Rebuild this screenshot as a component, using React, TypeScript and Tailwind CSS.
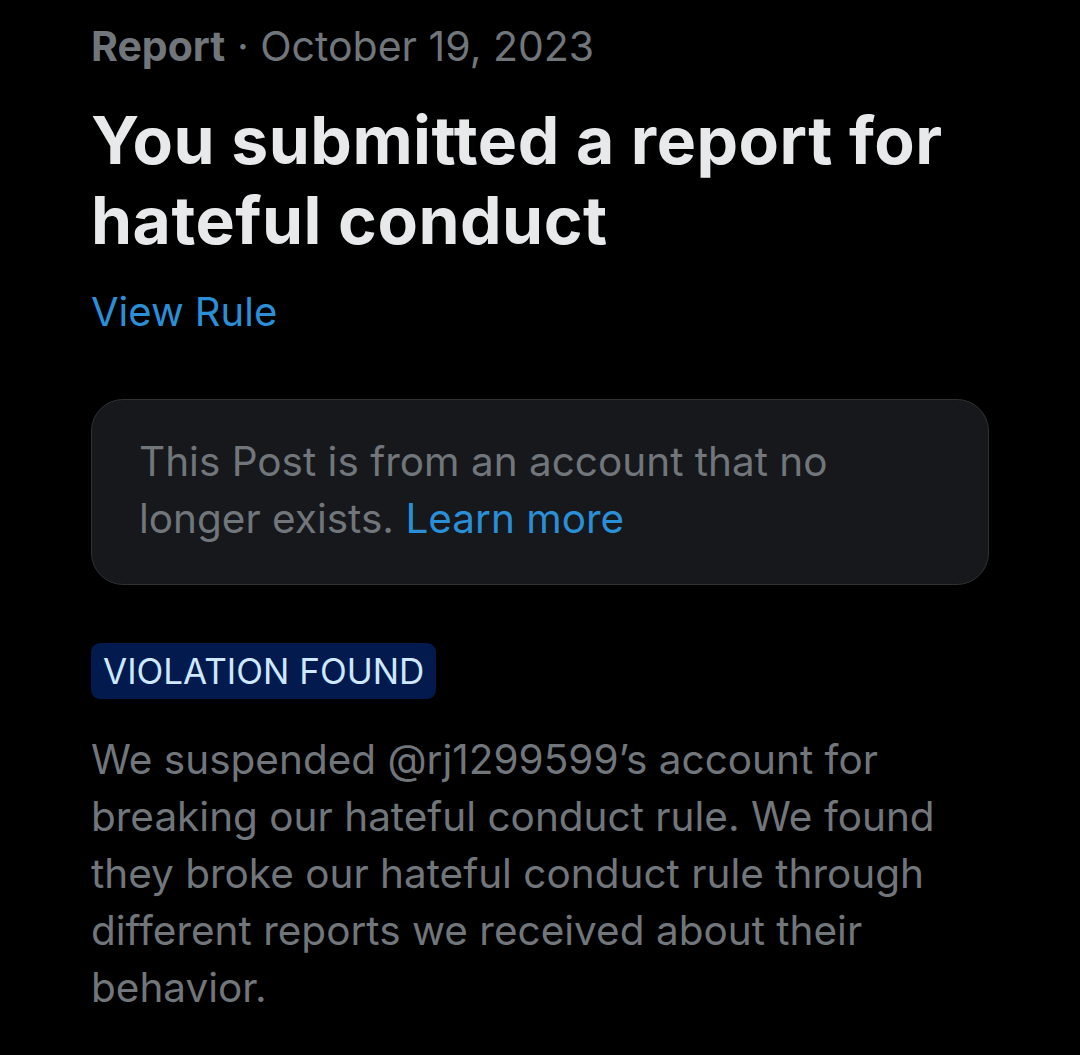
export default function App() {
  return (
    <div className="min-h-screen bg-black px-[91px] pt-[22px] pb-10 font-['Inter',sans-serif]">
      {/* Header */}
      <div className="text-[41px] leading-[48px] text-[#71767b]">
        <span className="font-bold">Report</span>
        <span> · October 19, 2023</span>
      </div>

      <h1 className="mt-[30px] text-[66px] leading-[80px] font-bold tracking-[0.5px] text-[#e7e9ea]">
        You submitted a report for hateful conduct
      </h1>

      <a className="mt-[28px] block text-[40px] leading-[48px] text-[#2b8fd8]">View Rule</a>

      {/* Tombstone */}
      <div className="mt-[63px] rounded-[32px] border border-[#2f3336] bg-[#16181c] pl-[47px] pr-[48px] pt-[33px] pb-[37px] text-[40.5px] leading-[57px] text-[#71767b]">
        This Post is from an account that no longer exists.{" "}
        <span className="text-[#2b8fd8]">Learn more</span>
      </div>

      {/* Verdict */}
      <div className="mt-[58px] inline-block rounded-[9px] bg-[#021a4e] px-[12px] py-[5px] text-[35px] leading-[46px] text-[#cde8ff]">
        VIOLATION FOUND
      </div>

      <p className="mt-[32px] text-[40.5px] leading-[57px] text-[#71767b]">
        We suspended @rj1299599’s account for breaking our hateful conduct rule. We found they broke
        our hateful conduct rule through different reports we received about their behavior.
      </p>
    </div>
  );
}
